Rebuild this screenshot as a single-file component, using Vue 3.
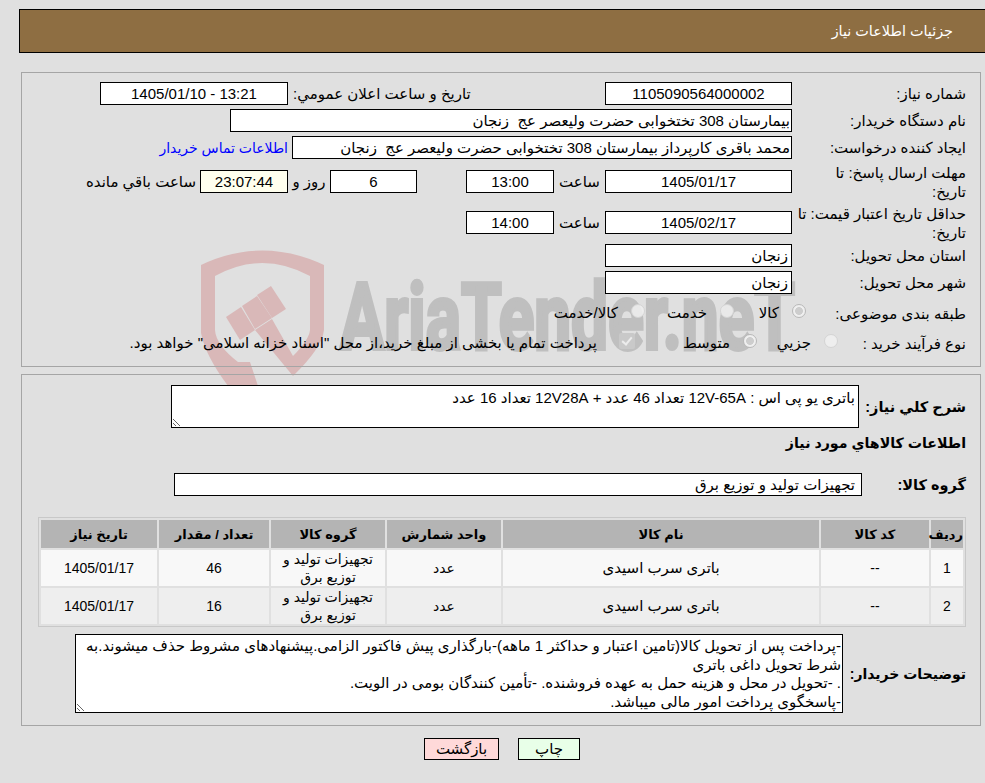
<template>
  <div class="page" dir="rtl">
    <svg class="watermark" width="985" height="783" viewBox="0 0 985 783">
      <path fill="#d9b8b8" d="M201 265 Q262 236 324 265 V330 Q322 348 293 376 L255 330 L272 319 L293 356 Q309 340 310 330 V276 Q262 250 215 276 V330 Q216 345 238 362 L250 362 L258 386 L228 386 Q205 355 201 333 Z" />
      <polygon fill="#d9b8b8" points="226,317 241,307 255,330 240,340" />
      <polygon fill="#d9b8b8" points="242,306 257,296 272,318 255,329" />
      <polygon fill="#d9b8b8" points="257,295 271,286 286,309 272,318" />
      <text class="wm-text" x="340" y="349" textLength="455" lengthAdjust="spacingAndGlyphs">AriaTender.neT</text>
    </svg>

    <div class="header">جزئیات اطلاعات نیاز</div>

    <div class="panel top-panel">
      <div class="row r1">
        <div class="label">شماره نیاز:</div>
        <div class="box center w187">1105090564000002</div>
        <div class="label-2">تاریخ و ساعت اعلان عمومي:</div>
        <div class="box center w188" dir="ltr">1405/01/10 - 13:21</div>
      </div>
      <div class="row r2">
        <div class="label">نام دستگاه خریدار:</div>
        <div class="box tight w562">بیمارستان 308 تختخوابی حضرت ولیعصر عج&nbsp; زنجان</div>
      </div>
      <div class="row r3">
        <div class="label">ایجاد کننده درخواست:</div>
        <div class="box tight w500">محمد باقری کارپرداز بیمارستان 308 تختخوابی حضرت ولیعصر عج&nbsp; زنجان</div>
        <a class="contact" href="#">اطلاعات تماس خریدار</a>
      </div>
      <div class="row r4">
        <div class="label">مهلت ارسال پاسخ: تا<br />تاریخ:</div>
        <div class="box center w187">1405/01/17</div>
        <div class="hour">ساعت</div>
        <div class="box center w88">13:00</div>
        <div class="box center w87 days">6</div>
        <div class="day-label">روز و</div>
        <div class="box center w88 timer">23:07:44</div>
        <div class="left-label">ساعت باقي مانده</div>
      </div>
      <div class="row r5">
        <div class="label">حداقل تاریخ اعتبار قیمت: تا<br />تاریخ:</div>
        <div class="box center w187">1405/02/17</div>
        <div class="hour">ساعت</div>
        <div class="box center w88">14:00</div>
      </div>
      <div class="row r6">
        <div class="label">استان محل تحویل:</div>
        <div class="box w187">زنجان</div>
      </div>
      <div class="row r7">
        <div class="label">شهر محل تحویل:</div>
        <div class="box w187">زنجان</div>
      </div>
      <div class="row r8">
        <div class="label short-a">طبقه بندی موضوعی:</div>
        <label class="opt opt-a"><input type="radio" name="cat" disabled checked /><span>کالا</span></label>
        <label class="opt opt-b"><input type="radio" name="cat" disabled /><span>خدمت</span></label>
        <label class="opt"><input type="radio" name="cat" disabled /><span>کالا/خدمت</span></label>
      </div>
      <div class="row r9">
        <div class="label short-b">نوع فرآیند خرید :</div>
        <label class="opt opt-c"><input type="radio" name="kind" disabled /><span>جزیي</span></label>
        <label class="opt opt-d"><input type="radio" name="kind" disabled checked /><span>متوسط</span></label>
        <label class="opt opt-e"><input type="checkbox" disabled checked /><span>پرداخت تمام یا بخشی از مبلغ خرید،از محل "اسناد خزانه اسلامی" خواهد بود.</span></label>
      </div>
    </div>

    <div class="panel bottom-panel">
      <div class="row s1">
        <div class="label-b l107">شرح کلي نیاز:</div>
        <textarea class="area a1" readonly :value="summary"></textarea>
      </div>
      <div class="heading">اطلاعات کالاهاي مورد نیاز</div>
      <div class="row s2">
        <div class="label-b l104">گروه کالا:</div>
        <div class="box w688 group">تجهیزات تولید و توزیع برق</div>
      </div>

      <table class="items">
        <thead>
          <tr>
            <th class="c1">ردیف</th>
            <th class="c2">کد کالا</th>
            <th class="c3">نام کالا</th>
            <th class="c4">واحد شمارش</th>
            <th class="c5">گروه کالا</th>
            <th class="c6">تعداد / مقدار</th>
            <th>تاریخ نیاز</th>
          </tr>
        </thead>
        <tbody>
          <tr v-for="item in items" :key="item.id">
            <td>{{ item.id }}</td>
            <td>--</td>
            <td class="name">باتری سرب اسیدی</td>
            <td>عدد</td>
            <td>تجهیزات تولید و<br />توزیع برق</td>
            <td>{{ item.qty }}</td>
            <td>1405/01/17</td>
          </tr>
        </tbody>
      </table>

      <div class="row s3">
        <div class="label-b l123">توضیحات خریدار:</div>
        <textarea class="area a2" readonly wrap="off" :value="notes"></textarea>
      </div>
    </div>

    <div class="footer">
      <button class="btn print" type="button">چاپ</button>
      <button class="btn back" type="button">بازگشت</button>
    </div>
  </div>
</template>

<script setup>
const summary = 'باتری یو پی اس : 12V-65A تعداد 46 عدد + 12V28A تعداد 16 عدد'

const notes = [
  '-پرداخت پس از تحویل کالا(تامین اعتبار و حداکثر 1 ماهه)-بارگذاری پیش فاکتور الزامی.پیشنهادهای مشروط حذف میشوند.به',
  'شرط تحویل داغی باتری',
  '. -تحویل در محل و هزینه حمل به عهده فروشنده. -تأمین کنندگان بومی در الویت.',
  '-پاسخگوی پرداخت امور مالی میباشد.'
].join('\n')

const items = [
  { id: 1, qty: 46 },
  { id: 2, qty: 16 }
]
</script>

<style>
html, body {
  margin: 0;
  background: #e0e0e0;
}
</style>

<style scoped>
.page {
  position: relative;
  width: 985px;
  height: 783px;
  overflow: hidden;
  box-sizing: border-box;
  padding-top: 9px;
  background: #e0e0e0;
  color: #000;
  font-family: "Liberation Sans", "DejaVu Sans", sans-serif;
  font-size: 15px;
}
.watermark {
  position: absolute;
  left: 0;
  top: 0;
}
.wm-text {
  font-family: Roboto, sans-serif;
  font-weight: 700;
  font-size: 92px;
  fill: #bfbfbf;
  stroke: #bfbfbf;
  stroke-width: 4px;
  direction: ltr;
}
.header, .panel, .footer {
  position: relative;
}
.header {
  box-sizing: border-box;
  height: 44px;
  margin-left: 19px;
  margin-right: -2px;
  padding-right: 33px;
  display: flex;
  align-items: center;
  background: #8e6e42;
  border: 1px solid #000;
  color: #fff;
  font-size: 14.4px;
}
.panel {
  box-sizing: border-box;
  width: 960px;
  margin-right: 4px;
  padding-right: 14px;
  border: 1px solid #a5a5a5;
}
.top-panel {
  height: 295px;
  margin-top: 19px;
  padding-top: 9px;
}
.bottom-panel {
  height: 352px;
  margin-top: 7px;
  padding-top: 10px;
}
.row {
  display: flex;
  align-items: center;
}
.r1, .r2, .r6 {
  margin-bottom: 4px;
}
.r3 {
  margin-bottom: 3px;
}
.r4, .r5 {
  height: 39px;
  margin-bottom: 2px;
}
.r7 {
  margin-bottom: 6px;
}
.r8 {
  height: 26px;
  margin-bottom: 4px;
}
.r9 {
  height: 26px;
}
.label {
  width: 174px;
  flex: none;
  line-height: 19px;
  white-space: nowrap;
}
.label.short-a {
  width: 160px;
}
.label.short-b {
  width: 128px;
}
.label-2 {
  width: 317px;
  flex: none;
  text-align: left;
  padding-left: 5px;
  box-sizing: border-box;
}
.box {
  box-sizing: border-box;
  height: 23px;
  flex: none;
  padding: 0 3px;
  line-height: 21px;
  background: #fff;
  border: 1px solid #000;
  white-space: nowrap;
  overflow: hidden;
}
.tight {
  padding: 0 1px;
}
.group {
  padding: 0 6px;
}
.center {
  text-align: center;
}
.w187 { width: 187px; }
.w188 { width: 188px; }
.w88 { width: 88px; }
.w87 { width: 87px; }
.w562 { width: 562px; }
.w500 { width: 500px; }
.w688 { width: 688px; }
.contact {
  margin-right: 4px;
  color: #00f;
  font-size: 14px;
  text-decoration: none;
  white-space: nowrap;
}
.hour {
  width: 51px;
  flex: none;
  text-align: center;
}
.days {
  margin-right: 49px;
}
.day-label {
  width: 42px;
  flex: none;
  text-align: center;
}
.timer {
  background: #ffffee;
}
.left-label {
  margin-right: 4px;
  white-space: nowrap;
}
.opt {
  display: flex;
  align-items: center;
  gap: 13px;
  white-space: nowrap;
}
.opt input {
  appearance: none;
  position: relative;
  box-sizing: border-box;
  flex: none;
  width: 14px;
  height: 14px;
  margin: 0 0 4px;
  border: 1px solid #d4d4d4;
  border-radius: 50%;
  background: rgba(240, 240, 240, 0.85);
}
.opt input[type="radio"]:checked {
  background: radial-gradient(circle, #cdcdcd 0 3.6px, #efefef 4.2px);
  border-color: #b8b8b8;
}
.opt input[type="checkbox"] {
  width: 16px;
  height: 16px;
  border: none;
  border-radius: 2px;
  background: #c9c9c9;
}
.opt input[type="checkbox"]::after {
  content: "";
  position: absolute;
  left: 5px;
  top: 2px;
  width: 4px;
  height: 8px;
  border: solid #ececec;
  border-width: 0 2px 2px 0;
  transform: rotate(40deg);
}
.opt-a { width: 72px; }
.opt-b { width: 89px; }
.opt-c { width: 81px; }
.opt-d { width: 122px; }
.opt-e { gap: 22px; }
.label-b {
  flex: none;
  font-weight: 700;
  font-size: 14.5px;
  white-space: nowrap;
}
.l107 { width: 107px; }
.l104 { width: 104px; }
.l123 {
  width: 123px;
  font-size: 14px;
}
.area {
  display: block;
  box-sizing: border-box;
  flex: none;
  margin: 0;
  background: #fff;
  border: 1px solid #000;
  border-radius: 0;
  color: #000;
  font: inherit;
  outline: none;
}
.a1 {
  width: 688px;
  height: 43px;
  padding: 3px 3px 1px;
}
.a2 {
  width: 768px;
  height: 79px;
  padding: 2px 1px 1px 3px;
  line-height: 18.6px;
  overflow: hidden;
}
.heading {
  margin-top: 6px;
  height: 19px;
  line-height: 19px;
  font-weight: 700;
  font-size: 14.2px;
}
.s2 {
  margin-top: 20px;
}
.items {
  width: 928px;
  margin-top: 21px;
  table-layout: fixed;
  border: 1px solid #c8c8c8;
  border-spacing: 2px;
  border-collapse: separate;
  background: #e0e0e0;
}
.items th {
  height: 28px;
  padding: 0;
  background: #b4b4b4;
  font-size: 13px;
  font-weight: 700;
}
.items td {
  height: 36px;
  padding: 0;
  text-align: center;
  font-size: 14px;
  line-height: 18px;
  background: #f8f8f8;
}
.items td.name {
  font-size: 15px;
}
.items tbody tr:nth-child(2) td {
  background: #eee;
}
.c1 { width: 32px; }
.c2 { width: 108px; }
.c3 { width: 316px; }
.c4 { width: 114px; }
.c5 { width: 114px; }
.c6 { width: 110px; }
.s3 {
  margin-top: 7px;
}
.footer {
  display: flex;
  gap: 19px;
  margin-top: 12px;
  padding-right: 405px;
}
.btn {
  box-sizing: border-box;
  height: 22px;
  margin: 0;
  padding: 0;
  border: 1px solid #000;
  color: #000;
  font: inherit;
}
.print {
  width: 62px;
  background: #e8ffe8;
}
.back {
  width: 75px;
  background: #ffd9d9;
}
</style>
